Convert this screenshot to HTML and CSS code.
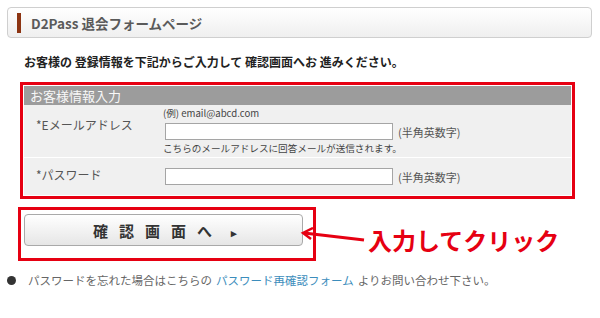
FILE: index.html
```html
<!DOCTYPE html>
<html lang="ja">
<head>
  <meta charset="UTF-8">
  <title>D2Pass 退会フォームページ</title>
  <link rel="stylesheet" href="styles.css">
</head>
<body>
  <div class="title-bar">
    <span class="accent"></span>
    <h1>D2Pass 退会フォームページ</h1>
  </div>

  <p class="lead">お客様の 登録情報を下記からご入力して 確認画面へお 進みください。</p>

  <div class="mark form-mark">
    <div class="form-panel">
      <div class="panel-head">お客様情報入力</div>
      <div class="row row-mail">
        <div class="label">*Eメールアドレス</div>
        <div class="field">
          <div class="hint">(例) email@abcd.com</div>
          <div class="input-line">
            <input type="text">
            <span class="note">(半角英数字)</span>
          </div>
          <div class="hint">こちらのメールアドレスに回答メールが送信されます。</div>
        </div>
      </div>
      <div class="row row-pass">
        <div class="label">*パスワード</div>
        <div class="field">
          <div class="input-line">
            <input type="password">
            <span class="note">(半角英数字)</span>
          </div>
        </div>
      </div>
    </div>
  </div>

  <div class="submit-row">
    <div class="mark button-mark">
      <button class="confirm">確認画面へ<span class="tri">&#9656;</span></button>
    </div>
    <svg class="arrow" width="70" height="20" viewBox="0 0 70 20">
      <path d="M4 6 L64 13" stroke="#e60012" stroke-width="3" fill="none"/>
      <path d="M13 1 L3 6 L11 12" stroke="#e60012" stroke-width="2.5" fill="none"/>
    </svg>
    <span class="callout">入力してクリック</span>
  </div>

  <p class="help"><span class="dot"></span>パスワードを忘れた場合はこちらの <a href="#">パスワード再確認フォーム</a> よりお問い合わせ下さい。</p>
</body>
</html>
```

FILE: styles.css
```css
body {
  margin: 0;
  padding: 7px 8px 0 7px;
  background: #fff;
  font-family: "Noto Sans CJK JP", "Noto Sans", sans-serif;
  color: #333;
}

.title-bar {
  display: flex;
  align-items: center;
  height: 29px;
  border: 1px solid #cfcfcf;
  border-radius: 4px;
  background: linear-gradient(#ffffff, #efefef);
}

.accent {
  width: 4px;
  height: 20px;
  margin-left: 9px;
  background: #8c3412;
}

h1 {
  margin: 0 0 0 10px;
  font-size: 13.5px;
  font-weight: bold;
  color: #5a5a5a;
}

.lead {
  margin: 16px 0 0 17px;
  font-size: 12px;
  line-height: 16px;
  font-weight: bold;
  color: #222;
}

.mark {
  border: 3px solid #e60012;
}

.form-mark {
  width: 549px;
  margin: 12px 0 0 13px;
}

.form-panel {
  padding: 1px;
  background: #fff;
}

.panel-head {
  height: 19px;
  line-height: 19px;
  padding-left: 6px;
  background: #9c9c9c;
  color: #f8f8f8;
  font-size: 13px;
}

.row {
  display: flex;
  background: #f0f0f0;
}

.row-mail {
  height: 52px;
  border-bottom: 1px solid #fff;
}

.row-pass {
  height: 37px;
  align-items: center;
}

.label {
  width: 127px;
  padding-left: 12px;
  font-size: 12px;
  line-height: 16px;
  color: #555;
}

.row-mail .label {
  padding-top: 12px;
}

.row-pass .label {
  margin-top: -3px;
}

.field {
  display: flex;
  flex-direction: column;
}

.row-mail .field {
  padding-top: 2px;
}

.hint {
  font-size: 9.6px;
  line-height: 13px;
  color: #444;
}

.input-line {
  display: flex;
  align-items: center;
  margin: 3px 0 2px 2px;
}

.row-pass .input-line {
  margin: 0 0 0 2px;
}

.input-line input {
  box-sizing: border-box;
  width: 228px;
  height: 17px;
  margin: 0;
  border: 1px solid #a5a5a5;
  background: #fff;
}

.note {
  margin-left: 5px;
  font-size: 11px;
  color: #555;
}

.submit-row {
  position: relative;
  display: flex;
  align-items: center;
  margin-top: 8px;
}

.button-mark {
  width: 289px;
  height: 44px;
  margin-left: 11px;
  padding: 4px 0 0 3px;
  box-sizing: content-box;
}

.confirm {
  width: 279px;
  height: 32px;
  border: 1px solid #a9a9a9;
  border-radius: 4px;
  background: linear-gradient(#ffffff, #e6e6e6);
  font-family: "Noto Sans CJK JP", sans-serif;
  font-size: 15px;
  font-weight: bold;
  letter-spacing: 11px;
  color: #333;
  padding: 0 0 0 14px;
}

.tri {
  margin-left: 8px;
  font-size: 11px;
}

.arrow {
  position: absolute;
  left: 293px;
  top: 20px;
}

.callout {
  margin: 11px 0 0 52px;
  font-size: 24px;
  font-weight: bold;
  color: #e60012;
}

.help {
  display: flex;
  align-items: center;
  margin: 11px 0 0 0;
  font-size: 11.5px;
  line-height: 16px;
  color: #666;
}

.dot {
  width: 9px;
  height: 9px;
  margin-right: 12px;
  border-radius: 50%;
  background: #333;
}

.help a {
  margin: 0 4px;
  color: #3c8dbc;
  text-decoration: none;
}
```
